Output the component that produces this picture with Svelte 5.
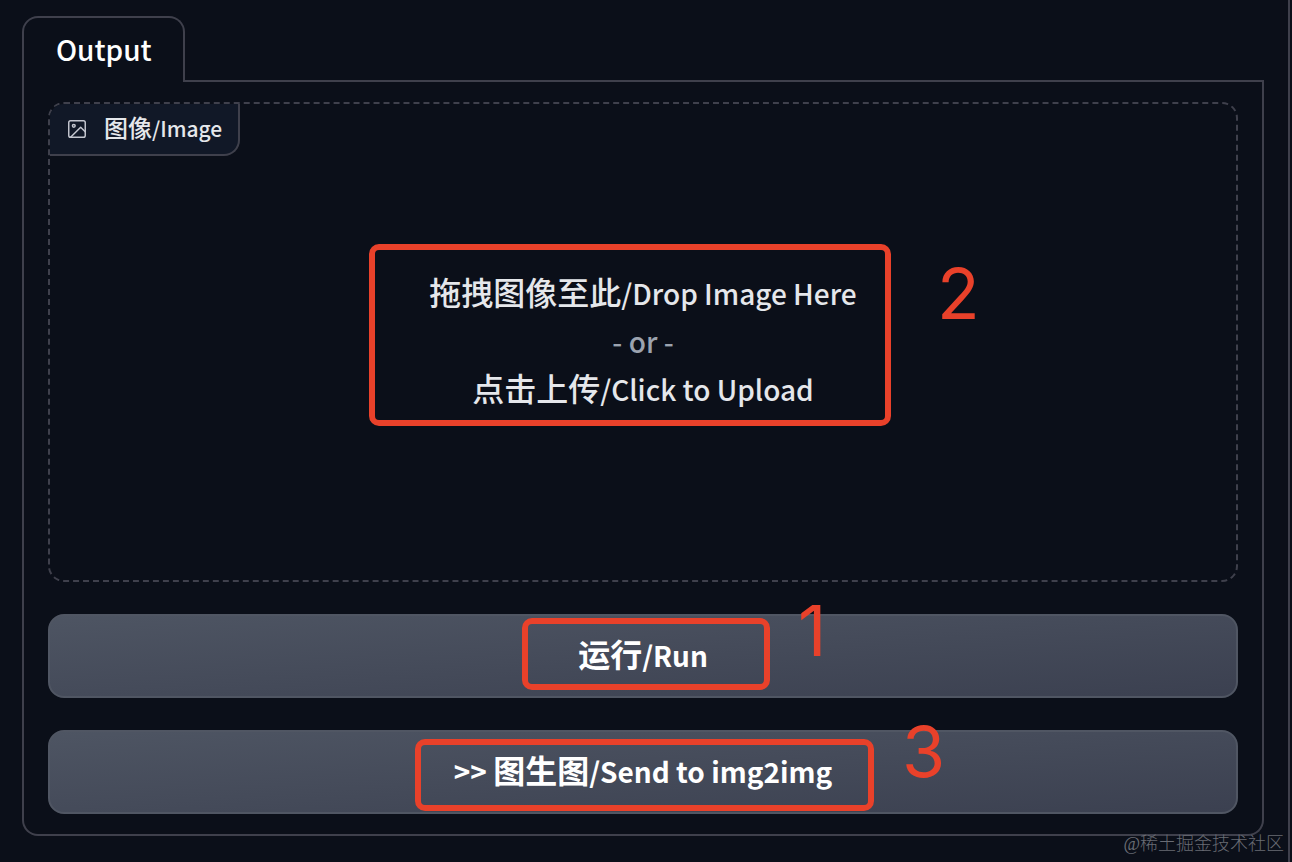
<script>
	const digits = { upload: '2', run: '1', send: '3' };
</script>

<main>
	<div class="tabs" role="tablist">
		<button class="tab" role="tab" aria-selected="true">Output</button>
		<div class="tab-line"></div>
	</div>

	<section class="panel">
		<div class="drop">
			<div class="label">
				<svg viewBox="0 0 24 24" width="22" height="22" fill="none" stroke="currentColor" stroke-width="1.6" stroke-linecap="round" stroke-linejoin="round">
					<rect x="3" y="3" width="18" height="18" rx="2" />
					<circle cx="8.5" cy="8.5" r="1.5" />
					<path d="M21 15l-5-5L5 21" />
				</svg>
				<span class="label-text"><span class="zh">图像</span>/Image</span>
			</div>
			<button class="upload">
				<span><span class="zh">拖拽图像至此</span>/Drop Image Here</span>
				<span class="or">- or -</span>
				<span><span class="zh">点击上传</span>/Click to Upload</span>
				<span class="mark mark-upload"><span class="digit">{digits.upload}</span></span>
			</button>
		</div>

		<button class="action">
			<span><span class="zh">运行</span>/Run</span>
			<span class="mark mark-run"><span class="digit">{digits.run}</span></span>
		</button>
		<button class="action">
			<span>&gt;&gt; <span class="zh">图生图</span>/Send to img2img</span>
			<span class="mark mark-send"><span class="digit">{digits.send}</span></span>
		</button>
	</section>

	<span class="watermark">@稀土掘金技术社区</span>
</main>

<style>
	:global(body) {
		margin: 0;
		background: #0b0f19;
	}

	main {
		position: relative;
		box-sizing: border-box;
		min-height: 100vh;
		margin-right: 2px;
		padding: 16px 24px 26px 22px;
		border-right: 2px solid #3f404c;
		font-family: "Noto Sans CJK SC", sans-serif;
		font-size: 28px;
		color: #e5e7eb;
	}

	button {
		margin: 0;
		border: 0;
		background: none;
		color: inherit;
		font: inherit;
		cursor: pointer;
	}

	.zh {
		font-size: 32px;
		line-height: 1;
	}

	.tabs {
		display: flex;
		height: 66px;
	}

	.tab {
		padding: 0 31px 2px 32px;
		border: 2px solid #3f404c;
		border-bottom: 0;
		border-radius: 16px 16px 0 0;
		color: #fff;
		font-weight: 500;
	}

	.tab-line {
		flex: 1;
		border-bottom: 2px solid #3f404c;
	}

	.panel {
		display: flex;
		flex-direction: column;
		gap: 32px;
		padding: 20px 24px;
		border: 2px solid #3f404c;
		border-top: 0;
		border-radius: 0 0 16px 16px;
	}

	.drop {
		position: relative;
		box-sizing: border-box;
		display: flex;
		flex-direction: column;
		align-items: center;
		justify-content: center;
		min-height: 480px;
		border: 2px dashed #3f404c;
		border-radius: 16px;
	}

	.label {
		position: absolute;
		top: 0;
		left: 0;
		display: flex;
		align-items: center;
		gap: 16px;
		height: 50px;
		padding: 0 16px;
		border: solid #3f404c;
		border-width: 0 2px 2px 0;
		border-radius: 14px 0 16px 0;
		background: #111827;
	}

	.label svg {
		color: #c4c6cf;
	}

	.label-text {
		padding-bottom: 2px;
		font-size: 21px;
		font-weight: 500;
	}

	.label-text .zh {
		font-size: 24px;
	}

	.upload {
		position: relative;
		display: flex;
		flex-direction: column;
		align-items: center;
		padding: 0 0 2px;
		font-weight: 500;
		line-height: 48px;
	}

	.or {
		color: #9ca3af;
	}

	.action {
		position: relative;
		display: flex;
		align-items: center;
		justify-content: center;
		height: 84px;
		padding: 0 0 2px;
		border: 2px solid #505663;
		border-radius: 16px;
		background: linear-gradient(to bottom right, #4e5563, #3b4050) border-box;
		color: #fff;
		font-weight: 700;
	}

	/* red callouts drawn over the controls */
	.mark {
		position: absolute;
		top: 50%;
		left: 50%;
		box-sizing: border-box;
		height: 72px;
		border: 6px solid #e9412a;
		border-radius: 10px;
		pointer-events: none;
	}

	.mark-upload {
		width: 522px;
		height: 182px;
		margin: -98px 0 0 -274px;
	}

	.mark-run {
		width: 248px;
		margin: -38px 0 0 -121px;
	}

	.mark-send {
		width: 459px;
		margin: -33px 0 0 -228px;
	}

	.digit {
		position: absolute;
		top: 0;
		left: 100%;
		margin-left: 52px;
		color: #e9412a;
		font: 400 70px/88px Inter, sans-serif;
	}

	.mark-run .digit,
	.mark-send .digit {
		margin: -37px 0 0 34px;
	}

	.watermark {
		position: absolute;
		right: 4px;
		bottom: 4px;
		color: #696c74;
		font: 300 18px/28px "Liberation Serif", "Noto Sans CJK SC", serif;
	}
</style>
